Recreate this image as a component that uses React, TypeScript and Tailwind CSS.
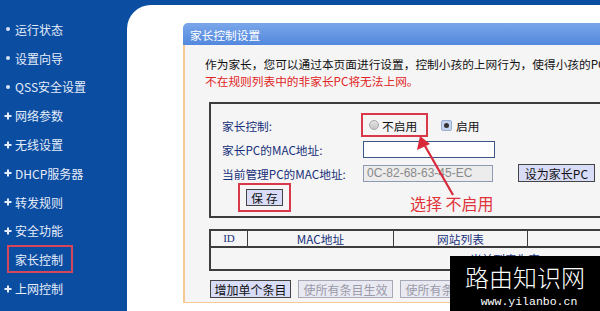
import React from "react";

const cjk = { fontFamily: '"Noto Sans CJK SC", "Noto Sans", sans-serif' };

const navItems: { label: string; plus: boolean }[] = [
  { label: "运行状态", plus: false },
  { label: "设置向导", plus: false },
  { label: "QSS安全设置", plus: false },
  { label: "网络参数", plus: true },
  { label: "无线设置", plus: true },
  { label: "DHCP服务器", plus: true },
  { label: "转发规则", plus: true },
  { label: "安全功能", plus: true },
  { label: "家长控制", plus: true },
  { label: "上网控制", plus: true },
];

function Bullet({ plus }: { plus: boolean }) {
  if (!plus) {
    return <span className="w-[4px] h-[4px] rounded-full bg-[#d6e2f5] ml-[6px] mr-[5px]" />;
  }
  return (
    <svg width="8" height="8" viewBox="0 0 8 8" className="ml-[4px] mr-[3px]">
      <rect x="3" y="0.5" width="2" height="7" fill="#e6eefb" />
      <rect x="0.5" y="3" width="7" height="2" fill="#e6eefb" />
    </svg>
  );
}

export default function App() {
  return (
    <div
      className="relative w-[600px] h-[311px] overflow-hidden flex bg-[#0b4da1] text-[11.7px] leading-[17px]"
      style={cjk}
    >
      {/* Sidebar */}
      <div className="w-[127px] shrink-0 pt-[15px] flex flex-col">
        {navItems.map((it) => (
          <div key={it.label} className="h-[28.8px] flex items-center text-[#e4ecfa] text-[12px]">
            {it.label === "家长控制" ? (
              <div className="flex items-center h-[28px] ml-[7px] w-[66px] border-2 border-[#d9455a] -mt-[1px]">
                <span className="ml-[6px]">{it.label}</span>
              </div>
            ) : (
              <>
                <Bullet plus={it.plus} />
                <span>{it.label}</span>
              </>
            )}
          </div>
        ))}
      </div>

      {/* Main white area */}
      <div className="flex-1 mt-[5px] bg-white rounded-tl-[24px] pl-[56px] pt-[18px]">
        <div className="w-[600px]">
          <div className="h-[22px] bg-gradient-to-b from-[#7aa6ea] to-[#5288dd] rounded-tl-[5px] text-white pl-[7px] flex items-center">
            家长控制设置
          </div>
          <div className="h-[258px] border-l-2 border-b border-[#f5c894] bg-[#f5f5f5] pt-[10px]">
            <div className="pl-[20px] whitespace-nowrap text-[#111]">
              作为家长，您可以通过本页面进行设置，控制小孩的上网行为，使得小孩的PC只能在指定时间访问指定的网站，而
            </div>
            <div className="pl-[20px] whitespace-nowrap text-[#e02424]">
              不在规则列表中的非家长PC将无法上网。
            </div>

            {/* Settings box */}
            <div className="ml-[24px] mt-[13px] h-[116px] w-[600px] border-2 border-[#3d3d3d] pl-[11px] pt-[9px] text-[#17307a]">
              <div className="flex items-center h-[24px]">
                <div className="w-[139px]">家长控制:</div>
                <div className="w-[67px] h-[24px] border-2 border-[#d9384a] flex items-center pl-[6px]">
                  <span className="w-[10px] h-[10px] rounded-full border border-[#a8a8a8] bg-gradient-to-b from-[#e4e4e4] to-[#c6c6c6]" />
                  <span className="ml-[3px] text-[#111]">不启用</span>
                </div>
                <div className="ml-[13px] flex items-center">
                  <span className="w-[11px] h-[11px] rounded-[2px] bg-[#c5d3ee] border border-[#9aaed4] flex items-center justify-center">
                    <span className="w-[5px] h-[5px] rounded-full bg-[#333]" />
                  </span>
                  <span className="ml-[4px] text-[#111]">启用</span>
                </div>
              </div>
              <div className="flex items-center mt-[4px] h-[17px]">
                <div className="w-[141px] whitespace-nowrap">家长PC的MAC地址:</div>
                <div className="w-[132px] h-[17px] bg-white border border-[#3c5688]" />
              </div>
              <div className="flex items-center mt-[6px] h-[18px]">
                <div className="w-[141px] whitespace-nowrap">当前管理PC的MAC地址:</div>
                <div
                  className="w-[130px] h-[17px] bg-[#ececec] border border-[#8d9bb3] text-[#8a8a8a] pl-[3px] flex items-center text-[12px]"
                  style={{ fontFamily: '"Liberation Sans", Arial, sans-serif' }}
                >
                  0C-82-68-63-45-EC
                </div>
                <div className="ml-[25px] w-[77px] h-[18px] bg-[#d8dcf6] border border-[#444] flex items-center justify-center text-[#111] text-[12px]">
                  设为家长PC
                </div>
              </div>
              <div className="flex items-center h-[29px] mt-[1px]">
                <div className="ml-[16px] w-[53px] h-[29px] border-2 border-[#d9384a] flex items-center justify-center">
                  <div className="w-[37px] h-[17px] bg-[#d8dcf6] border border-[#444] flex items-center justify-center text-[#111] tracking-[3px] pl-[3px]">
                    保存
                  </div>
                </div>
                <div className="ml-[119px] mt-[12px] text-[16px] text-[#e0333c]">选择 不启用</div>
              </div>
            </div>

            {/* Table */}
            <div className="ml-[24px] mt-[11px] w-[592px] border-2 border-[#3d3d3d] text-[#17307a]">
              <div className="flex h-[17px] border-b-2 border-[#3d3d3d]">
                <div
                  className="w-[37px] border-r border-[#3d3d3d] flex items-center justify-center text-[11px]"
                  style={{ fontFamily: '"Liberation Serif", serif' }}
                >
                  ID
                </div>
                <div className="w-[146px] border-r border-[#3d3d3d] flex items-center justify-center">MAC地址</div>
                <div className="w-[134px] border-r border-[#3d3d3d] flex items-center justify-center">网站列表</div>
                <div className="flex-1 flex items-center justify-center">日程计划</div>
              </div>
              <div className="h-[21px] flex items-center justify-center text-[#17307a]">当前列表为空</div>
            </div>

            {/* Buttons */}
            <div className="ml-[25px] mt-[9px] flex gap-[7px]">
              <div className="w-[81px] h-[18px] bg-[#d8dcf6] border border-[#444] flex items-center justify-center text-[#111] text-[12px]">
                增加单个条目
              </div>
              <div className="w-[95px] h-[18px] bg-[#e9e9f2] border border-[#a8a8b8] flex items-center justify-center text-[#9a9aa8] text-[12px]">
                使所有条目生效
              </div>
              <div className="w-[95px] h-[18px] bg-[#e9e9f2] border border-[#a8a8b8] flex items-center justify-center text-[#9a9aa8] text-[12px]">
                使所有条目失效
              </div>
            </div>
          </div>
        </div>
      </div>

      {/* Red arrow annotation */}
      <svg className="absolute left-0 top-0 pointer-events-none" width="600" height="311" viewBox="0 0 600 311">
        <line x1="453" y1="195" x2="425" y2="146" stroke="#d8283a" strokeWidth="2.2" />
        <polygon points="420,136 417,150 430,144" fill="#d8283a" />
      </svg>

      {/* Watermark */}
      <div className="absolute left-[450px] top-[256px] w-[150px] h-[55px] bg-black flex flex-col items-center pt-[7px]">
        <div className="text-white text-[24px] leading-[28px] font-light" style={{ fontFamily: '"Noto Sans CJK SC", serif' }}>
          路由知识网
        </div>
        <div className="text-white text-[11.5px] leading-[14px] mt-[4px] pl-[8px]" style={{ fontFamily: '"Liberation Mono", monospace' }}>
          www.yilanbo.cn
        </div>
      </div>
    </div>
  );
}
